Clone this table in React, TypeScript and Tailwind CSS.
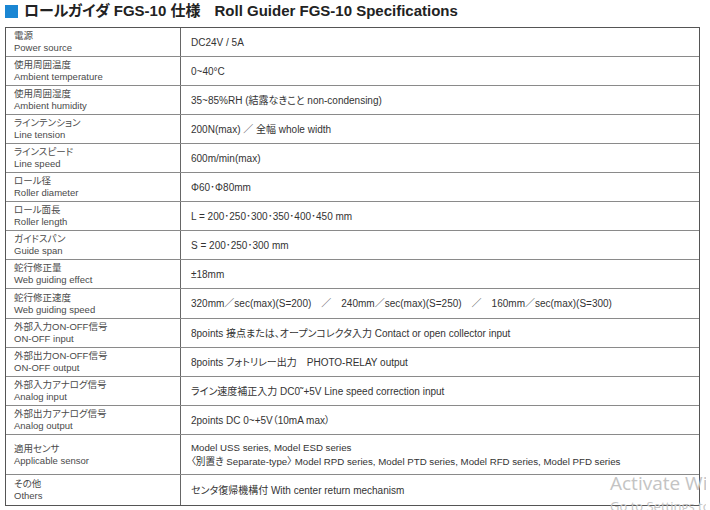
import React from "react";

const rows: { ja: string; en: string; v: React.ReactNode; h: string }[] = [
  { ja: "電源", en: "Power source", v: "DC24V / 5A", h: "h-[29px]" },
  { ja: "使用周囲温度", en: "Ambient temperature", v: "0~40°C", h: "h-[29px]" },
  { ja: "使用周囲湿度", en: "Ambient humidity", v: "35~85%RH (結露なきこと non-condensing)", h: "h-[29px]" },
  { ja: "ラインテンション", en: "Line tension", v: "200N(max) ／ 全幅 whole width", h: "h-[29px]" },
  { ja: "ラインスピード", en: "Line speed", v: "600m/min(max)", h: "h-[29px]" },
  { ja: "ロール径", en: "Roller diameter", v: "Φ60･Φ80mm", h: "h-[29px]" },
  { ja: "ロール面長", en: "Roller length", v: "L = 200･250･300･350･400･450 mm", h: "h-[29px]" },
  { ja: "ガイドスパン", en: "Guide span", v: "S = 200･250･300 mm", h: "h-[29px]" },
  { ja: "蛇行修正量", en: "Web guiding effect", v: "±18mm", h: "h-[29px]" },
  {
    ja: "蛇行修正速度",
    en: "Web guiding speed",
    v: "320mm／sec(max)(S=200)　／　240mm／sec(max)(S=250)　／　160mm／sec(max)(S=300)",
    h: "h-[30px]",
  },
  { ja: "外部入力ON-OFF信号", en: "ON-OFF input", v: "8points 接点または、オープンコレクタ入力 Contact or open collector input", h: "h-[29px]" },
  { ja: "外部出力ON-OFF信号", en: "ON-OFF output", v: "8points フォトリレー出力　PHOTO-RELAY output", h: "h-[29px]" },
  { ja: "外部入力アナログ信号", en: "Analog input", v: "ライン速度補正入力 DC0˜+5V Line speed correction input", h: "h-[29px]" },
  { ja: "外部出力アナログ信号", en: "Analog output", v: "2points DC 0~+5V（10mA max）", h: "h-[29px]" },
  {
    ja: "適用センサ",
    en: "Applicable sensor",
    v: (
      <div className="flex flex-col leading-[14px] text-[9.7px]">
        <span>Model USS series, Model ESD series</span>
        <span>〈別置き Separate-type〉 Model RPD series, Model PTD series, Model RFD series, Model PFD series</span>
      </div>
    ),
    h: "h-[40px]",
  },
  { ja: "その他", en: "Others", v: "センタ復帰機構付 With center return mechanism", h: "h-[30px]" },
];

export default function App() {
  return (
    <div
      className="relative w-[710px] h-[510px] bg-white overflow-hidden text-[#333] [font-feature-settings:'palt']"
      style={{ fontFamily: '"Liberation Sans", "Noto Sans CJK JP", sans-serif' }}
    >
      <div className="flex items-center h-[22px] pl-[5px] pt-[1px]">
        <div className="w-[13px] h-[13px] bg-[#1a86d3]" />
        <div className="ml-[6px] text-[15px] font-bold text-[#222] whitespace-nowrap">
          ロールガイダ FGS-10 仕様<span className="ml-[14px]">Roll Guider FGS-10 Specifications</span>
        </div>
      </div>
      <div className="ml-[5px] mt-[5px] w-[695px] border border-[#555]">
        {rows.map((r, i) => (
          <div
            key={i}
            className={`grid grid-cols-[175px_1fr] ${r.h} ${i < rows.length - 1 ? "border-b-[1.5px] border-[#8a8a8a]" : ""}`}
          >
            <div className="flex flex-col justify-center pl-[8px] border-r-[1.5px] border-[#666] text-[9.5px] leading-[12px] text-[#4a4a4a]">
              <span>{r.ja}</span>
              <span>{r.en}</span>
            </div>
            <div className="flex items-center pl-[10px] text-[10px] text-[#333] whitespace-nowrap">{r.v}</div>
          </div>
        ))}
      </div>
      <div className="absolute left-0 top-0 w-[706px] h-[510px] overflow-hidden pointer-events-none">
        <div
          className="absolute left-[610px] top-[474px] text-[19px] text-[#c4c4c4] whitespace-nowrap leading-none"
          style={{ fontFamily: '"Open Sans", "Liberation Sans", sans-serif' }}
        >
          Activate Windows
        </div>
        <div
          className="absolute left-[610px] top-[500px] text-[13px] text-[#c4c4c4] whitespace-nowrap leading-none"
          style={{ fontFamily: '"Open Sans", "Liberation Sans", sans-serif' }}
        >
          Go to Settings to activate Windows.
        </div>
      </div>
    </div>
  );
}
